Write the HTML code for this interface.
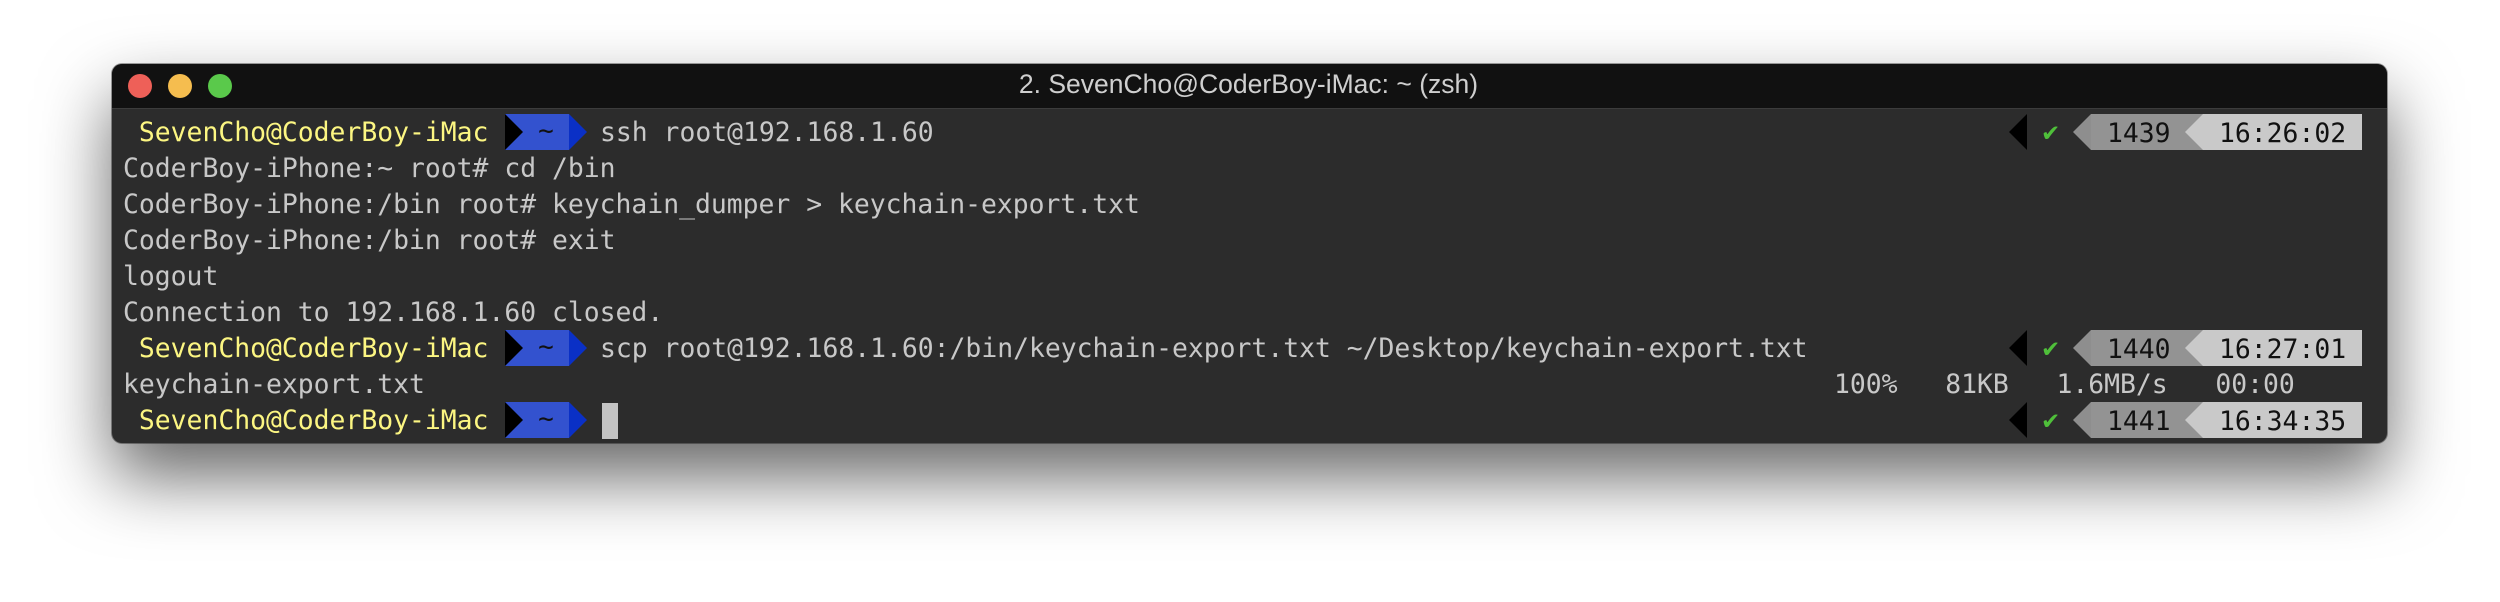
<!DOCTYPE html>
<html><head><meta charset="utf-8"><style>
html,body{margin:0;padding:0;background:#fff;width:2500px;height:602px;overflow:hidden;position:relative}
.win{position:absolute;left:112px;top:64px;width:2275px;height:379px;background:#2c2c2c;border-radius:10px;box-shadow:0 34px 70px rgba(0,0,0,0.6),0 0 0 1px rgba(0,0,0,0.35);overflow:hidden}
.tb{position:absolute;left:0;top:0;width:100%;height:44px;background:#111;border-bottom:1px solid #3c3c3c}
.dot{position:absolute;top:10px;width:24px;height:24px;border-radius:50%}
.title{position:absolute;left:805px;width:663px;top:5px;height:44px;line-height:44px;text-align:center;color:#cfcfcf;font:26.5px "Liberation Sans",sans-serif;white-space:nowrap}
.l{position:absolute;left:123px;height:36px;line-height:36px;font:26.4px "DejaVu Sans Mono",monospace;color:#c8c8c8;white-space:pre}
.y{color:#fcf682}
.a{position:absolute;height:36px}
.m{position:absolute;font:26.4px "DejaVu Sans Mono",monospace;line-height:36px;white-space:pre}
</style></head><body>
<div class="win">
<div class="tb">
<div class="dot" style="left:16px;background:#ee6058"></div>
<div class="dot" style="left:56px;background:#f5bd4f"></div>
<div class="dot" style="left:96px;background:#5ac94b"></div>
<div class="title">2. SevenCho@CoderBoy-iMac: ~ (zsh)</div>
</div>
</div>

<div class="l y" style="top:117px"> SevenCho@CoderBoy-iMac</div>
<div class="l" style="top:117px;left:600px">ssh root@192.168.1.60</div>
<div class="l" style="top:153px">CoderBoy-iPhone:~ root# cd /bin</div>
<div class="l" style="top:189px">CoderBoy-iPhone:/bin root# keychain_dumper &gt; keychain-export.txt</div>
<div class="l" style="top:225px">CoderBoy-iPhone:/bin root# exit</div>
<div class="l" style="top:261px">logout</div>
<div class="l" style="top:297px">Connection to 192.168.1.60 closed.</div>
<div class="l y" style="top:333px"> SevenCho@CoderBoy-iMac</div>
<div class="l" style="top:333px;left:600px">scp root@192.168.1.60:/bin/keychain-export.txt ~/Desktop/keychain-export.txt</div>
<div class="l" style="top:369px">keychain-export.txt</div>
<div class="l" style="top:369px;left:1834px">100%   81KB   1.6MB/s   00:00</div>
<div class="l y" style="top:405px"> SevenCho@CoderBoy-iMac</div>
<div class="a" style="left:602px;top:403px;width:16px;background:#c3c3c3"></div>

<svg class="a" style="left:505px;top:114px" width="82" height="36"><rect width="64" height="36" fill="#3352cf"/><polygon points="0,0 18,18 0,36" fill="#000"/><polygon points="64,0 82,18 64,36" fill="#0a30c6"/><text x="41" y="25" font-family="DejaVu Sans Mono" font-size="26" fill="#111" text-anchor="middle">~</text></svg>
<svg class="a" style="left:505px;top:330px" width="82" height="36"><rect width="64" height="36" fill="#3352cf"/><polygon points="0,0 18,18 0,36" fill="#000"/><polygon points="64,0 82,18 64,36" fill="#0a30c6"/><text x="41" y="25" font-family="DejaVu Sans Mono" font-size="26" fill="#111" text-anchor="middle">~</text></svg>
<svg class="a" style="left:505px;top:402px" width="82" height="36"><rect width="64" height="36" fill="#3352cf"/><polygon points="0,0 18,18 0,36" fill="#000"/><polygon points="64,0 82,18 64,36" fill="#0a30c6"/><text x="41" y="25" font-family="DejaVu Sans Mono" font-size="26" fill="#111" text-anchor="middle">~</text></svg>

<svg class="a" style="left:2009px;top:114px" width="353" height="36"><polygon points="18,0 0,18 18,36" fill="#000"/><text x="32" y="27" font-family="DejaVu Sans" font-size="23" fill="#4fbf3a" font-weight="bold">✔</text><polygon points="82,0 64,18 82,36" fill="#8e8e8e"/><rect x="82" width="112" height="36" fill="#939393"/><polygon points="194,0 176,18 194,36" fill="#c9c9c9"/><rect x="194" width="159" height="36" fill="#c9c9c9"/></svg>
<div class="m" style="left:2107px;top:116px;color:#111">1439</div>
<div class="m" style="left:2219px;top:116px;color:#111">16:26:02</div>
<svg class="a" style="left:2009px;top:330px" width="353" height="36"><polygon points="18,0 0,18 18,36" fill="#000"/><text x="32" y="27" font-family="DejaVu Sans" font-size="23" fill="#4fbf3a" font-weight="bold">✔</text><polygon points="82,0 64,18 82,36" fill="#8e8e8e"/><rect x="82" width="112" height="36" fill="#939393"/><polygon points="194,0 176,18 194,36" fill="#c9c9c9"/><rect x="194" width="159" height="36" fill="#c9c9c9"/></svg>
<div class="m" style="left:2107px;top:332px;color:#111">1440</div>
<div class="m" style="left:2219px;top:332px;color:#111">16:27:01</div>
<svg class="a" style="left:2009px;top:402px" width="353" height="36"><polygon points="18,0 0,18 18,36" fill="#000"/><text x="32" y="27" font-family="DejaVu Sans" font-size="23" fill="#4fbf3a" font-weight="bold">✔</text><polygon points="82,0 64,18 82,36" fill="#8e8e8e"/><rect x="82" width="112" height="36" fill="#939393"/><polygon points="194,0 176,18 194,36" fill="#c9c9c9"/><rect x="194" width="159" height="36" fill="#c9c9c9"/></svg>
<div class="m" style="left:2107px;top:404px;color:#111">1441</div>
<div class="m" style="left:2219px;top:404px;color:#111">16:34:35</div>
</body></html>
